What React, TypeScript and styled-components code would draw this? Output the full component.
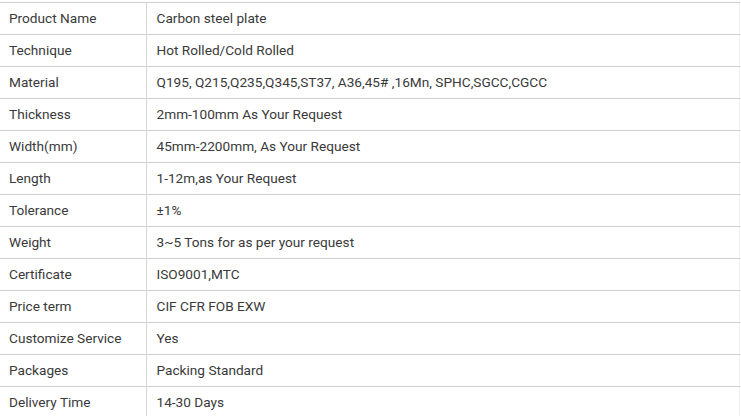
import React from "react";
import styled, { createGlobalStyle } from "styled-components";

const Global = createGlobalStyle`
  html, body { margin: 0; padding: 0; background: #fff; }
  body { font-family: Roboto, "Liberation Sans", Arial, sans-serif; }
`;

const Wrap = styled.div`
  padding-top: 2px;
  width: 741px;
`;

const Table = styled.table`
  width: 740px;
  border-collapse: collapse;
  table-layout: fixed;
  border-right: 1px solid #f0f0f0;
`;

const Row = styled.tr`
  border-top: 1px solid #cfcfcf;
  border-bottom: 1px solid #cfcfcf;
`;

const Cell = styled.td<{ $label?: boolean }>`
  box-sizing: border-box;
  padding: 7px 0 8px ${(p) => (p.$label ? "9px" : "10px")};
  height: 32px;
  line-height: 16px;
  font-size: 13.65px;
  color: #3a3a3a;
  white-space: nowrap;
  vertical-align: top;
  border-left: ${(p) => (p.$label ? "none" : "1px solid #d6d6d6")};
  width: ${(p) => (p.$label ? "146px" : "auto")};
`;

const rows: [string, string][] = [
  ["Product Name", "Carbon steel plate"],
  ["Technique", "Hot Rolled/Cold Rolled"],
  ["Material", "Q195, Q215,Q235,Q345,ST37, A36,45# ,16Mn, SPHC,SGCC,CGCC"],
  ["Thickness", "2mm-100mm As Your Request"],
  ["Width(mm)", "45mm-2200mm, As Your Request"],
  ["Length", "1-12m,as Your Request"],
  ["Tolerance", "±1%"],
  ["Weight", "3~5 Tons for as per your request"],
  ["Certificate", "ISO9001,MTC"],
  ["Price term", "CIF CFR FOB EXW"],
  ["Customize Service", "Yes"],
  ["Packages", "Packing Standard"],
  ["Delivery Time", "14-30 Days"],
];

export default function App() {
  return (
    <Wrap>
      <Global />
      <Table>
        <tbody>
          {rows.map(([k, v]) => (
            <Row key={k}>
              <Cell $label>{k}</Cell>
              <Cell>{v}</Cell>
            </Row>
          ))}
        </tbody>
      </Table>
    </Wrap>
  );
}
